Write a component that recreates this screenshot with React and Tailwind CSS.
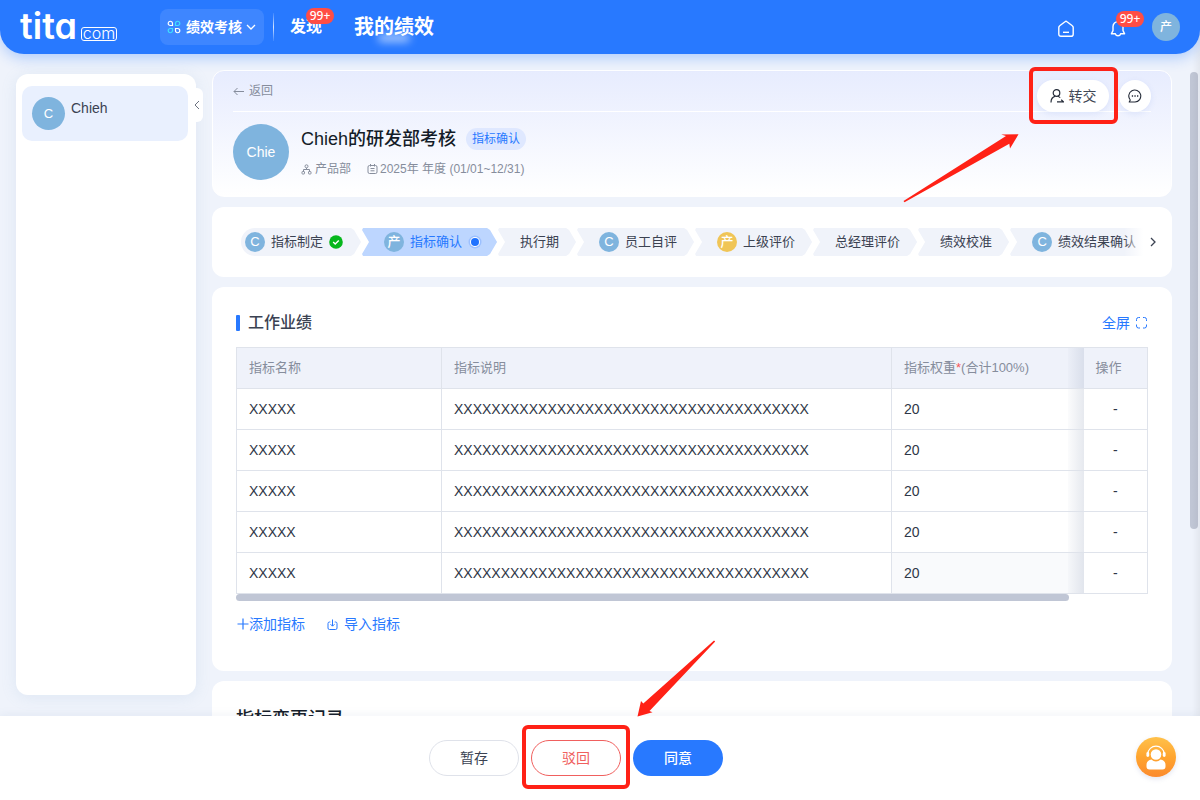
import React from 'react';

const ROWS = [0, 1, 2, 3, 4];
const DESCRIPTION = 'X'.repeat(38);

function Avatar({ children, className }) {
  return (
    <span className={`flex shrink-0 items-center justify-center rounded-full text-white ${className}`}>
      {children}
    </span>
  );
}

function CountBadge({ className }) {
  return (
    <span
      className={`absolute flex h-4 w-7 items-center justify-center rounded-full bg-[#ff4d45] font-['Noto_Sans',sans-serif] text-[12px] leading-4 font-medium text-white ${className}`}
    >
      99+
    </span>
  );
}

function Header() {
  return (
    <header className="relative z-10 flex h-[54px] shrink-0 items-center rounded-b-3xl bg-[#2879ff] pr-5 pl-5 text-white shadow-[0_4px_14px_rgba(40,121,255,0.32)]">
      <a href="#home" className="flex w-[140px] items-end gap-1 pb-0.5 text-white">
        <span className="font-['Inter',sans-serif] text-[36px] leading-9 font-semibold [font-feature-settings:'cv11','ss01']">
          tita
        </span>
        <span className="mb-[3px] flex h-[14px] w-9 items-center justify-center rounded-[3px] border border-white pb-0.5 font-['Inter',sans-serif] text-[16px] leading-4 font-light">
          com
        </span>
      </a>
      <button type="button" className="flex h-9 items-center rounded-lg bg-white/10 pr-2 pl-[7px] text-[14px] font-bold">
        <svg width="14" height="14" viewBox="0 0 14 14" fill="none" strokeWidth="1.2" className="mr-[5px]">
          <path d="M1.200 3.400a2.100 2.100 0 1 1 4.300 0v2.100H3.300A2.100 2.100 0 0 1 1.200 3.400Z" stroke="#fff" />
          <path d="M12.800 3.400a2.100 2.100 0 1 0-4.300 0v2.100h2.200a2.100 2.100 0 0 0 2.100-2.100Z" stroke="#3fe0ff" />
          <path d="M1.200 10.600a2.100 2.100 0 1 0 4.300 0V8.500H3.300a2.100 2.100 0 0 0-2.100 2.100Z" stroke="#3fe0ff" />
          <path d="M12.800 10.600a2.100 2.100 0 1 1-4.300 0V8.500h2.200a2.100 2.100 0 0 1 2.100 2.100Z" stroke="#fff" />
        </svg>
        绩效考核
        <svg width="10" height="8" viewBox="0 0 10 8" fill="none" stroke="#fff" strokeWidth="1.3" className="ml-1">
          <path d="m1 2 4 4 4-4" />
        </svg>
      </button>
      <span className="mr-4 ml-[9px] h-7 w-px bg-linear-to-b from-white/10 via-white/80 to-white/10" />
      <nav className="flex items-center gap-8">
        <a href="#discover" className="relative text-[16px] font-bold">
          发现
          <CountBadge className="-top-[7px] left-4" />
        </a>
        <a href="#performance" className="relative text-[20px] font-bold">
          我的绩效
          <span className="absolute bottom-0 left-6 h-2 w-8 rounded-full bg-white/60 blur-[4px]" />
        </a>
      </nav>
      <div className="ml-auto flex items-center">
        <button type="button" aria-label="首页" className="mr-9">
          <svg width="16" height="18" viewBox="0 0 16 18" fill="none" stroke="#fff" strokeWidth="1.4" className="translate-y-0.5">
            <path d="M.8 7.500c0-.7.3-1.300.9-1.700L7 1.700c.6-.5 1.400-.5 2 0l5.300 4.100c.6.4.9 1 .9 1.700v6.700c0 1.200-.9 2.100-2.100 2.100H2.900c-1.200 0-2.100-.9-2.100-2.100Z" strokeLinejoin="round" />
            <path d="M5 12.300h6" />
          </svg>
        </button>
        <button type="button" aria-label="通知" className="relative mr-[26px]">
          <svg width="16" height="18" viewBox="0 0 16 18" fill="none" stroke="#fff" strokeWidth="1.400" strokeLinejoin="round" className="translate-y-0.5">
            <path d="M8 1.600c-2.800 0-5 2.200-5 5v4L1.400 13.800h4c.3 1.300 1.300 2 2.600 2s2.300-.7 2.600-2h4L13 10.600v-4c0-2.800-2.200-5-5-5Z" />
          </svg>
          <CountBadge className="-top-[7px] left-[6px]" />
        </button>
        <Avatar className="h-7 w-7 bg-[#7fb4de] text-[12px] font-medium">产</Avatar>
      </div>
    </header>
  );
}

function Sidebar() {
  return (
    <aside className="relative mt-5 mb-[21px] w-[180px] shrink-0 rounded-xl bg-white pt-3 pr-2 pl-[6px] shadow-[0_2px_16px_rgba(120,160,200,0.14)]">
      <a href="#chieh" className="flex h-[55px] gap-[6px] rounded-[10px] bg-[#e9f0fe] px-[10px] pt-[11px] text-[14px] text-[#3b4252]">
        <Avatar className="h-[33px] w-[33px] bg-[#7fb4de] text-[13px]">C</Avatar>
        <span className="leading-[22px]">Chieh</span>
      </a>
      <button
        type="button"
        aria-label="收起"
        className="absolute top-[14px] left-full flex h-[34px] w-[7px] items-center justify-center rounded-r-md bg-white"
      >
        <svg width="6" height="10" viewBox="0 0 6 10" fill="none" stroke="#6b7280" className="shrink-0 -translate-x-[3px]">
          <path d="M5 1 1 5l4 4" />
        </svg>
      </button>
    </aside>
  );
}

function Summary() {
  return (
    <section className="relative h-[127px] shrink-0 rounded-xl border border-white bg-linear-to-b from-[#e7ecfe] to-white px-5">
      <div className="flex h-[41px] items-center border-b border-white">
        <a href="#back" className="flex items-center gap-[5px] text-[12px] text-[#868d9c]">
          <svg width="11" height="9" viewBox="0 0 11 9" fill="none" stroke="#868d9c">
            <path d="M11 4.500H1M4.500 1 1 4.500 4.500 8" />
          </svg>
          返回
        </a>
      </div>
      <div className="mt-3 flex gap-3">
        <Avatar className="h-14 w-14 bg-[#7fb4de] text-[14px]">Chie</Avatar>
        <div className="pt-1">
          <div className="flex items-center gap-[10px]">
            <h1 className="text-[18px] leading-[22px] font-medium text-[#141c28]">Chieh的研发部考核</h1>
            <span className="flex h-[22px] items-center rounded-full bg-[#dfe8ff] px-[6px] text-[12px] text-[#2879ff]">指标确认</span>
          </div>
          <div className="mt-[10px] flex items-center gap-4 text-[12px] leading-[18px] text-[#868d9c]">
            <span className="flex items-center gap-[3px]">
              <svg width="11" height="11" viewBox="0 0 11 11" fill="none" stroke="#868d9c">
                <circle cx="5.500" cy="2.300" r="1.500" />
                <path d="M5.500 4v1.500M2.500 7.500v-2h6v2" />
                <rect x="1" y="7.500" width="2.500" height="2.500" rx=".6" />
                <rect x="7.500" y="7.500" width="2.500" height="2.500" rx=".6" />
              </svg>
              产品部
            </span>
            <span className="flex items-center gap-0.5">
              <svg width="11" height="10" viewBox="0 0 11 10" fill="none" stroke="#868d9c">
                <rect x="1" y="1.500" width="9" height="8" rx="1.500" />
                <path d="M3.500 0v2.500M7.500 0v2.500M3.500 4.500h4M3.500 6.800h4" />
              </svg>
              2025年 年度 (01/01~12/31)
            </span>
          </div>
        </div>
      </div>
      <div className="absolute top-[9px] right-5 flex gap-[10px]">
        <div className="relative">
          <button
            type="button"
            className="flex h-8 w-[72px] items-center justify-center gap-[5px] rounded-full bg-white text-[14px] text-[#3f4755] shadow-[0_2px_6px_rgba(80,120,220,0.12)]"
          >
            <svg width="14" height="14" viewBox="0 0 14 14" fill="none" stroke="#242b38" strokeWidth="1.200">
              <circle cx="6.500" cy="4" r="3.300" />
              <path d="M1 13.500c0-3.300 1.800-5.600 4.500-6.300M7.800 7.200c.9.300 1.700.8 2.400 1.500" />
              <path d="M7 12.800h6.500l-2.300-2.100" />
            </svg>
            转交
          </button>
          <span className="pointer-events-none absolute -top-[13px] -right-[9px] -bottom-3 -left-2 rounded-md border-4 border-[#ff2116]" />
          <svg
            className="pointer-events-none absolute top-[50px] right-[86px]"
            width="120"
            height="76"
            viewBox="0 0 120 76"
            fill="#ff2116"
          >
            <path d="m.5 71 102.500-65-4.800-1.500 17.300-.2-8.500 14.200-.7-4.800L1.500 72.300Z" />
          </svg>
        </div>
        <button
          type="button"
          aria-label="评论"
          className="flex h-8 w-8 items-center justify-center rounded-full bg-white shadow-[0_2px_6px_rgba(80,120,220,0.12)]"
        >
          <svg width="14" height="14" viewBox="0 0 14 14" fill="none" stroke="#242b38" strokeWidth="1.100">
            <path d="M1.200 13 2.300 11A6 6 0 1 1 7 13Z" strokeLinejoin="round" />
            <path d="M3.800 7h1.300M6.400 7h1.300M9 7h1.300" strokeWidth="1.300" />
          </svg>
        </button>
      </div>
    </section>
  );
}

const STEPS = [
  { label: '指标制定', avatar: 'C', done: true },
  { label: '指标确认', avatar: '产', current: true },
  { label: '执行期' },
  { label: '员工自评', avatar: 'C' },
  { label: '上级评价', avatar: '产', gold: true },
  { label: '总经理评价' },
  { label: '绩效校准' },
  { label: '绩效结果确认', avatar: 'C' },
];

function stepClass(step, index) {
  if (index === 0) {
    return 'rounded-l-full bg-[#f0f3fa] pl-1 pr-[19px] text-[#3b4252] [clip-path:polygon(0_0,calc(100%-11px)_0,calc(100%-8px)_2px,calc(100%-1px)_50%,calc(100%-8px)_calc(100%-2px),calc(100%-11px)_100%,0_100%)]';
  }
  const arrow =
    '[clip-path:polygon(1px_0,calc(100%-11px)_0,calc(100%-8px)_2px,calc(100%-1px)_50%,calc(100%-8px)_calc(100%-2px),calc(100%-11px)_100%,1px_100%,0_calc(100%-2px),7px_50%,0_2px)]';
  return step.current
    ? `${arrow} bg-[#bdd6ff] pl-[22px] pr-4 text-[#2879ff]`
    : `${arrow} bg-[#f0f3fa] pl-[22px] pr-[18px] text-[#3b4252]`;
}

function Steps() {
  return (
    <section className="relative flex h-[70px] shrink-0 items-center rounded-xl bg-white pr-6 pl-[29px]">
      <ol className="flex min-w-0 flex-1 overflow-hidden">
        {STEPS.map((step, index) => (
          <li
            key={step.label}
            className={`flex h-7 shrink-0 items-center gap-[6px] text-[13px] whitespace-nowrap ${stepClass(step, index)}`}
          >
            {step.avatar && (
              <Avatar className={`h-5 w-5 text-[13px] font-medium ${step.gold ? 'bg-[#f0c557]' : 'bg-[#7fb4de]'}`}>{step.avatar}</Avatar>
            )}
            <span>{step.label}</span>
            {step.done && (
              <svg width="14" height="14" viewBox="0 0 14 14">
                <circle cx="7" cy="7" r="6.800" fill="#06b71c" />
                <path d="m4.200 7 2 2 3.600-3.500" fill="none" stroke="#fff" strokeWidth="1.400" />
              </svg>
            )}
            {step.current && (
              <svg width="14" height="14" viewBox="0 0 14 14">
                <circle cx="7" cy="7" r="6.500" fill="#9cc0ff" />
                <circle cx="7" cy="7" r="5" fill="#fff" />
                <circle cx="7" cy="7" r="4" fill="#1f72ff" />
              </svg>
            )}
          </li>
        ))}
      </ol>
      <span className="absolute right-6 h-7 w-6 bg-linear-to-r from-white/0 to-white to-80%" />
      <button type="button" aria-label="下一步" className="absolute right-4">
        <svg width="6" height="10" viewBox="0 0 6 10" fill="none" stroke="#3b4252" strokeWidth="1.300">
          <path d="m1 1 4 4-4 4" />
        </svg>
      </button>
    </section>
  );
}

const cell = 'h-[41px] border border-[#dfe3eb] px-3 py-0';
const fade =
  'border-r-0 bg-[linear-gradient(to_right,rgba(130,145,175,0.03),rgba(130,145,175,0.2))] bg-[length:16px_100%] bg-right bg-no-repeat';

function Metrics() {
  return (
    <section className="h-[384px] shrink-0 rounded-xl bg-white px-6 pt-6">
      <div className="flex h-6 items-center">
        <span className="mr-2 h-4 w-1 rounded-[1px] bg-[#2879ff]" />
        <h2 className="text-[16px] leading-6 font-medium text-[#3b4252]">工作业绩</h2>
        <button type="button" className="ml-auto flex items-center gap-[6px] text-[14px] text-[#2879ff]">
          全屏
          <svg width="12" height="12" viewBox="0 0 12 12" fill="none" stroke="#2879ff">
            <path d="M.5 4V2.500a2 2 0 0 1 2-2H4M7 .5h1.500a2 2 0 0 1 2 2V4M10.500 7.500V9a2 2 0 0 1-2 2H7M4 11H2.500a2 2 0 0 1-2-2V7.500" />
          </svg>
        </button>
      </div>
      <table className="mt-3 w-full table-fixed border-collapse text-left text-[14px] text-[#2f3747]">
        <colgroup>
          <col className="w-[205px]" />
          <col />
          <col className="w-[192px]" />
          <col className="w-[64px]" />
        </colgroup>
        <thead>
          <tr className="bg-[#eff2fa] text-[13px] text-[#868d9c]">
            <th scope="col" className={`${cell} font-normal`}>指标名称</th>
            <th scope="col" className={`${cell} font-normal`}>指标说明</th>
            <th scope="col" className={`${cell} ${fade} font-normal`}>
              指标权重<span className="text-[#f5575b]">*</span>(合计100%)
            </th>
            <th scope="col" className={`${cell} border-l-0 font-normal`}>操作</th>
          </tr>
        </thead>
        <tbody>
          {ROWS.map((row) => (
            <tr key={row}>
              <td className={cell}>XXXXX</td>
              <td className={cell}>{DESCRIPTION}</td>
              <td className={`${cell} ${fade} ${row === 4 ? 'bg-[#f9fafc]' : ''}`}>20</td>
              <td className={`${cell} border-l-0 text-center`}>-</td>
            </tr>
          ))}
        </tbody>
      </table>
      <div className="h-[7px] w-[91.3%] rounded-full bg-[#c0c6d5]" />
      <div className="mt-3 flex items-center gap-[22px] text-[14px] leading-[22px] text-[#2879ff]">
        <button type="button" className="flex items-center pl-px">
          <svg width="12" height="12" viewBox="0 0 12 12" fill="none" stroke="#2879ff" strokeWidth="1.200">
            <path d="M6 .5v11M.5 6h11" />
          </svg>
          添加指标
        </button>
        <button type="button" className="flex items-center gap-[6px]">
          <svg width="11" height="11" viewBox="0 0 11 11" fill="none" stroke="#2879ff">
            <path d="M3.300 3H2.500A1.500 1.500 0 0 0 1 4.500V9a1.500 1.500 0 0 0 1.500 1.500h6A1.500 1.500 0 0 0 10 9V4.500A1.500 1.500 0 0 0 8.500 3h-.8M5.500 .5v6.500M3.500 5.200l2 2 2-2" />
          </svg>
          导入指标
        </button>
      </div>
    </section>
  );
}

function Footer() {
  return (
    <footer className="relative z-10 flex h-[84px] shrink-0 items-center justify-center gap-3 bg-white pr-12 text-[14px] shadow-[0_-2px_8px_rgba(100,130,170,0.08)]">
      <button type="button" className="h-9 w-[90px] rounded-full border border-[#dfe2ea] bg-white text-[#3b4252]">
        暂存
      </button>
      <div className="relative">
        <button type="button" className="h-9 w-[90px] rounded-full border border-[#f0605e] bg-white text-[#f0605e]">
          驳回
        </button>
        <span className="pointer-events-none absolute -top-[15px] -right-[9px] -bottom-[13px] -left-[9px] rounded-md border-4 border-[#ff2116]" />
        <svg
          className="pointer-events-none absolute bottom-[58px] left-[105px]"
          width="80"
          height="78"
          viewBox="0 0 80 78"
          fill="#ff2116"
        >
          <path d="M78 .5 7.300 63.500 5 61 1.500 76.500l15-4.200-3-1.300L79.200 1.500Z" />
        </svg>
      </div>
      <button type="button" className="h-9 w-[90px] rounded-full bg-[#2879ff] font-medium text-white">
        同意
      </button>
      <button
        type="button"
        aria-label="客服"
        className="absolute top-[21px] right-6 flex h-10 w-10 items-center justify-center rounded-full bg-linear-to-b from-[#ffc14a] via-[#ffa52f] to-[#fb8a2e] shadow-[0_2px_5px_rgba(120,130,180,0.2)]"
      >
        <svg width="20" height="25" viewBox="0 0 20 25" fill="#fff">
          <circle cx="10" cy="9.500" r="5.300" />
          <path d="M5.500 14.500c1.200 1.200 2.700 1.900 4.500 1.900s3.300-.7 4.500-1.900c3 .3 5 2.400 5 5.300v1.700c0 2-1 3-3 3h-13c-2 0-3-1-3-3v-1.700c0-2.900 2-5 5-5.300Z" />
          <path d="M2 8.500a8 7.300 0 0 1 16 0" fill="none" stroke="#fff" strokeWidth="1.200" />
          <rect x=".4" y="7" width="2.800" height="5" rx="1.400" />
          <rect x="16.800" y="7" width="2.800" height="5" rx="1.400" />
        </svg>
      </button>
    </footer>
  );
}

export default function App() {
  return (
    <div className="relative flex h-screen flex-col overflow-hidden bg-[#eff3fb] font-['Liberation_Sans','Noto_Sans_CJK_SC',sans-serif]">
      <Header />
      <div className="flex min-h-0 flex-1 pr-0.5 pl-4">
        <Sidebar />
        <main className="ml-4 flex min-w-0 flex-1 flex-col gap-[10px] overflow-hidden pt-4">
          <Summary />
          <Steps />
          <Metrics />
          <section className="h-[160px] shrink-0 rounded-xl bg-white px-6 pt-6">
            <h2 className="text-[18px] leading-7 font-medium text-[#141c28]">指标变更记录</h2>
          </section>
        </main>
        <div className="mt-[18px] ml-[18px] h-[457px] w-2 shrink-0 rounded-full bg-[#c0c6d5]" />
      </div>
      <Footer />
      <span className="pointer-events-none absolute inset-y-0 right-0 w-2 bg-linear-to-r from-black/0 to-black/5" />
    </div>
  );
}
